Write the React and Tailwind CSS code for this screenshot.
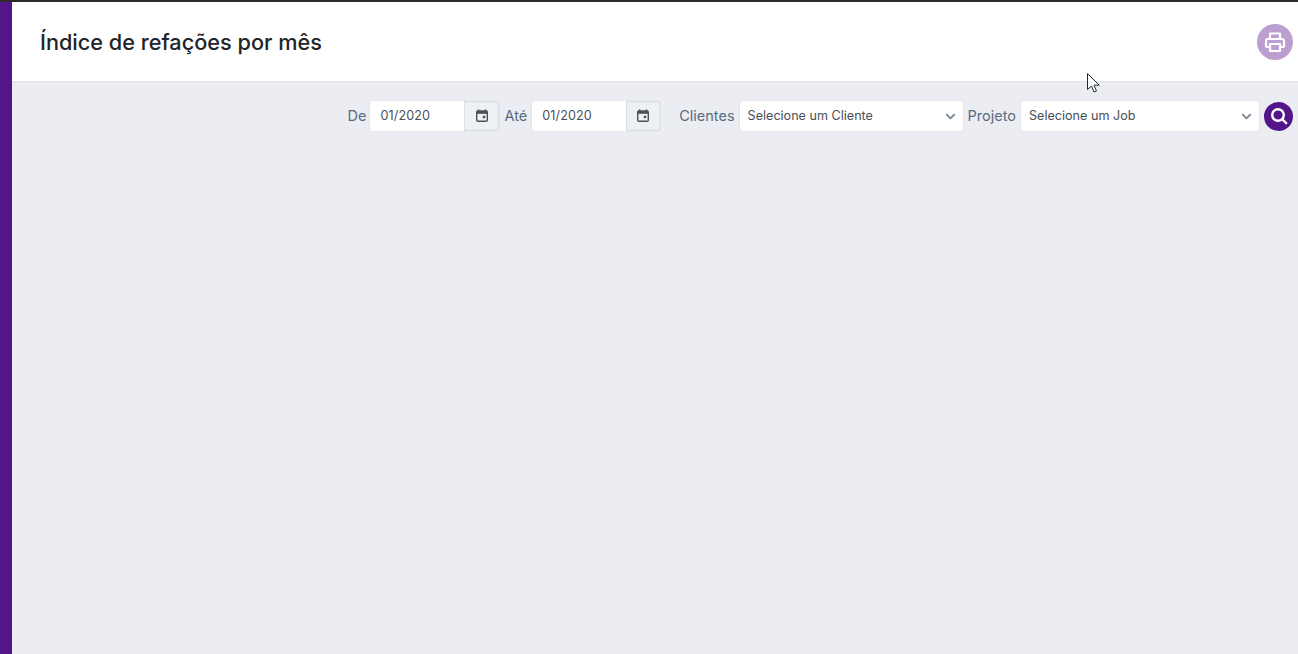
import { ChevronDown } from 'lucide-react'

function CalendarIcon() {
  return (
    <svg width="14" height="14" viewBox="0 0 14 14" fill="none" className="text-[#495057]">
      <path d="M3.5 0.500v2.500M10.500 0.500v2.500" stroke="currentColor" strokeWidth="1.6" />
      <rect x="1.700" y="2" width="10.600" height="10.300" rx="1.200" stroke="currentColor" strokeWidth="1.400" />
      <rect x="1.700" y="2" width="10.600" height="2.800" fill="currentColor" />
      <rect x="7.800" y="6.800" width="2.400" height="2.400" fill="currentColor" />
    </svg>
  )
}

function DateField({ value, addonWidth }) {
  return (
    <div className="flex h-[30px] rounded-[3px] shadow-[0_0_1px_rgba(100,116,139,0.35)]">
      <div className="w-[94px] bg-white rounded-l-[3px] pl-[10px] flex items-center text-[12.6px] tracking-[0.01em] text-[#495057]">
        {value}
      </div>
      <div className={`${addonWidth} bg-[#eef0f4] border border-[#d8dde6] rounded-r-[3px] flex items-center justify-center`}>
        <CalendarIcon />
      </div>
    </div>
  )
}

function SelectField({ label, width }) {
  return (
    <div className={`${width} h-[30px] bg-white rounded-[3px] shadow-[0_0_1px_rgba(100,116,139,0.35)] flex items-center justify-between pl-2 pr-[5px] text-[12.6px] text-[#495057]`}>
      <span>{label}</span>
      <ChevronDown size={15} strokeWidth={3} className="text-[#7d8793]" />
    </div>
  )
}

function Label({ children, className = '' }) {
  return <span className={`text-[14.5px] text-[#5a6a7e] ${className}`}>{children}</span>
}

export default function App() {
  return (
    <div className="relative h-[654px] overflow-hidden font-['Inter','Liberation_Sans',sans-serif] bg-[#ebedf2]">
      <div className="h-[2px] bg-[#2b2b2b]" />
      <div className="flex h-[652px]">
        <aside className="w-3 bg-[#54148a] shrink-0" />
        <main className="flex-1 min-w-0">
          <header className="h-[80px] bg-white border-b border-[#dfe2e8] flex items-center justify-between pl-[28px] pr-[5px]">
            <h1 className="text-[21.7px] font-medium text-[#212529] leading-none pt-[2px]">Índice de refações por mês</h1>
            <button className="w-9 h-9 rounded-full bg-[#bb9fd1] flex items-center justify-center">
              <svg width="22" height="22" viewBox="0 0 22 22" fill="none" stroke="white" strokeWidth="2.2" strokeLinejoin="round">
                <path d="M6 8V2.500h10V8" />
                <path d="M6 16H3.500A1.500 1.500 0 0 1 2 14.500V10a2 2 0 0 1 2-2h14a2 2 0 0 1 2 2v4.500A1.500 1.500 0 0 1 18.500 16H16" />
                <rect x="6" y="13" width="10" height="7" />
              </svg>
            </button>
          </header>
          <div className="flex items-center justify-end pt-[19px] pr-[5px]">
            <Label className="mr-1">De</Label>
            <DateField value="01/2020" addonWidth="w-[35px]" />
            <Label className="ml-[5px] mr-[5px]">Até</Label>
            <DateField value="01/2020" addonWidth="w-[34px]" />
            <Label className="ml-[19px] mr-[5px]">Clientes</Label>
            <SelectField label="Selecione um Cliente" width="w-[223px]" />
            <Label className="ml-[5px] mr-[5px]">Projeto</Label>
            <SelectField label="Selecione um Job" width="w-[238px]" />
            <button className="ml-[5px] w-[29px] h-[29px] rounded-full bg-[#54148a] flex items-center justify-center">
              <svg width="18" height="18" viewBox="0 0 18 18" fill="none" stroke="white" strokeWidth="2.400" strokeLinecap="round">
                <circle cx="8" cy="8" r="5.800" />
                <path d="M12.500 12.500 16.200 16.200" />
              </svg>
            </button>
          </div>
        </main>
      </div>
      {/* mouse cursor caught in the capture */}
      <svg className="absolute left-[1086px] top-[72px]" width="15" height="22" viewBox="0 0 15 22">
        <path d="M1.500 1.500v16l4-3.500 2.500 6 2.500-1-2.500-5.800h5.200z" fill="white" stroke="#1f2937" strokeWidth="1" strokeLinejoin="round" />
      </svg>
    </div>
  )
}
